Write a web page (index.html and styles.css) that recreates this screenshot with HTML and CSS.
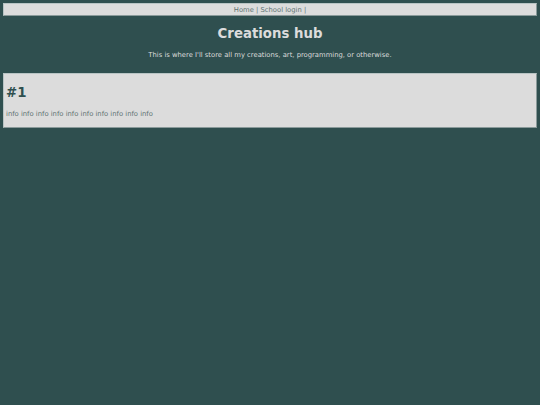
FILE: index.html
```html
<!DOCTYPE html>
<html>
<head>
<meta charset="utf-8">
<link rel="stylesheet" href="styles.css">
</head>
<body>
<nav class="nav"><a class="link" href="#">Home</a> | <a class="link" href="#">School login</a> |</nav>
<header class="header">
<h1 class="title">Creations hub</h1>
<p class="subtitle">This is where I'll store all my creations, art, programming, or otherwise.</p>
</header>
<section class="card">
<h2 class="card-title">#1</h2>
<p class="card-text">info info info info info info info info info info</p>
</section>
</body>
</html>
```
FILE: styles.css
```css
html, body {
  background: #2f4f4f;
}
body {
  margin: 3px;
  font-family: "DejaVu Sans", Verdana, sans-serif;
}
.nav {
  background: #dcdcdc;
  border: 1px solid #8a9a9a;
  border-top-color: #b8c4c4;
  border-left-color: #b8c4c4;
  text-align: center;
  font-size: 6.8px;
  line-height: 10px;
  padding-top: 1px;
  color: #5f7373;
}
.link {
  color: #5f7373;
  text-decoration: none;
}
.header {
  text-align: center;
  padding-top: 10px;
  padding-bottom: 13px;
}
.title {
  margin: 0;
  font-size: 13.3px;
  line-height: 16px;
  color: #dcdcdc;
}
.subtitle {
  margin: 9px 0 0;
  font-size: 6.8px;
  line-height: 9px;
  color: #dcdcdc;
}
.card {
  background: #dcdcdc;
  border: 1px solid #8a9a9a;
  border-top-color: #b8c4c4;
  border-left-color: #b8c4c4;
  padding: 11px 2px 8px;
}
.card-title {
  margin: 0;
  font-size: 13.3px;
  line-height: 16px;
  color: #2f4f4f;
}
.card-text {
  margin: 9px 0 0;
  font-size: 6.8px;
  line-height: 9px;
  color: #5f7373;
}
```
